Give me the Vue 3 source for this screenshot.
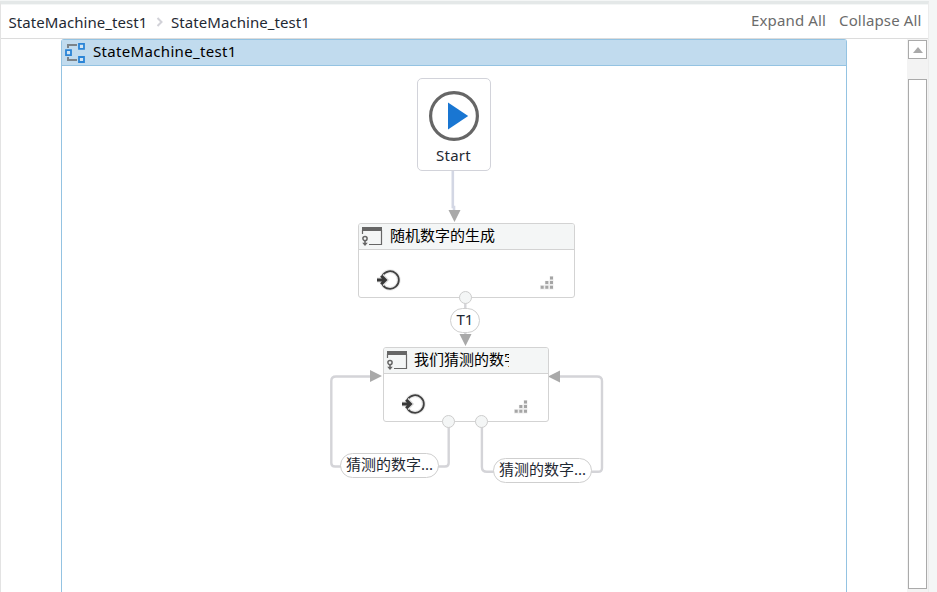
<script setup>
const crumbs = ['StateMachine_test1', 'StateMachine_test1']
const states = [
  { id: 'generate', title: '随机数字的生成' },
  { id: 'guess', title: '我们猜测的数字' },
]
const transitions = [
  { id: 't1', label: 'T1' },
  { id: 'left', label: '猜测的数字...' },
  { id: 'right', label: '猜测的数字...' },
]
</script>

<template>
  <div class="window">
    <div class="designer">
      <header class="toolbar">
        <nav class="crumbs">
          <span class="crumb">{{ crumbs[0] }}</span>
          <svg class="chevron" width="8" height="10" viewBox="0 0 8 10"><path d="M1.5 1 5.5 5 1.5 9" /></svg>
          <span class="crumb">{{ crumbs[1] }}</span>
        </nav>
        <div class="actions"><span class="expand">Expand All</span><span class="collapse">Collapse All</span></div>
      </header>
      <div class="body">
        <main class="machine">
          <div class="machine-head">
            <svg width="21" height="21" viewBox="0 0 21 21" fill="none">
              <path d="M3 6V3h9M3 15v3h9" stroke="#7b8389" stroke-width="2" />
              <path d="M14 1.8h5v5h-5zM14 15h5v5h-5zM1 8.2h5v5H1z" fill="#d3e5f3" stroke="#2a84d6" stroke-width="1.8" />
            </svg>
            <span class="machine-title">{{ crumbs[1] }}</span>
          </div>
          <div class="canvas">
            <svg class="links" width="784" height="526" viewBox="62 66 784 526" fill="none">
              <path d="M452.8 170V207H454V212" stroke="#d3d7e4" stroke-width="2.6" />
              <path d="M465.3 298V340M448.7 421V463Q448.7 466.5 445 466.5H335Q331.3 466.5 331.3 463V381Q331.3 376.5 336 376.5H371M481.9 421V467Q481.9 471.8 487 471.8H598Q602 471.8 602 468V381Q602 376.5 597 376.5H559" stroke="#d4d4d8" stroke-width="2.4" />
              <path d="M448.5 210h12l-6 12zM459.5 334h12l-6 12zM370 370v12l12-6zM560 370.5v12l-12-6z" fill="#a9a9a9" />
            </svg>

            <div class="start">
              <svg width="52" height="52" viewBox="0 0 52 52">
                <circle cx="26" cy="26" r="23.4" fill="#fff" stroke="#666" stroke-width="3.2" />
                <path d="M20 12.5 40.2 26 20 39.5z" fill="#1976d2" />
              </svg>
              <span class="start-label">Start</span>
            </div>

            <section v-for="s in states" :key="s.id" class="state" :class="s.id">
              <div class="state-head">
                <svg width="22" height="21" viewBox="0 0 22 21" fill="none">
                  <path d="M1 1h20v4H1z" fill="#666" />
                  <path d="M1.5 4v4M20.5 4v14.5H8" stroke="#666" stroke-width="1.2" />
                  <circle cx="4" cy="12.6" r="2.1" stroke="#666" stroke-width="1.5" />
                  <path d="M4 15v3" stroke="#666" stroke-width="1.5" />
                  <path d="M1.2 16.7h5.6L4 20z" fill="#666" />
                </svg>
                <span class="state-title">{{ s.title }}</span>
              </div>
              <div class="state-body">
                <svg width="26" height="24" viewBox="0 0 26 24" fill="none">
                  <circle cx="15" cy="12" r="8.7" stroke="#e8e8e8" stroke-width="4" />
                  <path d="M7.6 7.3A8.8 8.8 0 1 1 7.6 16.7" stroke="#414141" stroke-width="1.8" />
                  <path d="M2 12h8M6.8 7.8l4 4.2-4 4.2" stroke="#dedede" stroke-width="5" />
                  <path d="M2 12h8M6.2 7.8l4.2 4.2-4.2 4.2" stroke="#383838" stroke-width="3" />
                </svg>
                <svg class="steps" width="14" height="14" viewBox="0 0 14 14">
                  <path d="M9.5 0h4v13.5H0V9h4.8V4.7h4.7z" fill="#eee" />
                  <path d="M10 .5h3v3h-3zM10 5h3v3h-3zM10 9.7h3v3h-3zM5.3 5h3v3h-3zM5.3 9.7h3v3h-3zM.7 9.7h3v3h-3z" fill="#a5a5a5" />
                </svg>
              </div>
            </section>

            <i class="port port-a"></i>
            <i class="port port-b"></i>
            <i class="port port-c"></i>
            <div v-for="t in transitions" :key="t.id" class="pill" :class="t.id">
              <span>{{ t.label }}</span>
            </div>
          </div>
        </main>
        <aside class="scrollbar">
          <div class="up"><svg width="10" height="6" viewBox="0 0 10 6"><path d="M5 0 10 6H0z" fill="#a9a9a9" /></svg></div>
          <div class="thumb"></div>
        </aside>
      </div>
    </div>
  </div>
</template>

<style>
body { background: #f4f6f6; overflow: hidden; }
</style>

<style scoped>
* { box-sizing: border-box; }
.window {
  width: 937px;
  height: 592px;
  padding-top: 1px;
  font: 15px/20px "Noto Sans", "Noto Sans CJK SC", sans-serif;
  color: #1f2933;
  background: #f4f6f6;
}
.designer {
  display: flex;
  flex-direction: column;
  width: 929px;
  height: 591px;
  background: #fff;
  border-top: 3px solid #e4e8e8;
  border-left: 1px solid #e3e3e3;
  border-right: 1px solid #ececec;
}
.toolbar {
  display: flex;
  flex: none;
  justify-content: space-between;
  height: 35px;
  padding: 0 6px 0 7.5px;
  border-top: 1px solid #f4f6f6;
  border-bottom: 1px solid #dcdcdc;
}
.crumbs { display: flex; align-items: center; height: 33px; }
.crumb { width: 139px; white-space: nowrap; letter-spacing: 0.07px; }
.chevron { margin: 0 7.5px 0 8px; width: 8px; }
.chevron path { fill: none; stroke: #d2d2d8; stroke-width: 2; }
.actions { display: flex; gap: 12px; padding-top: 5px; color: #6b6b6b; white-space: nowrap; }
.expand { width: 76px; letter-spacing: 0.15px; }
.collapse { width: 83px; letter-spacing: 0.15px; }
.body { display: flex; flex: 1; min-height: 0; }
.machine {
  display: flex;
  flex-direction: column;
  width: 786px;
  height: 553px;
  margin-left: 60px;
  border: 1px solid #94c3e2;
  border-bottom: 0;
  border-radius: 3px 3px 0 0;
}
.machine-head {
  display: flex;
  flex: none;
  align-items: center;
  gap: 7px;
  height: 26px;
  padding-left: 3px;
  color: #000;
  background: #c1dbee;
  border-bottom: 1px solid #94c3e2;
}
.machine-title { margin-top: -4px; letter-spacing: 0.33px; }
.canvas { position: relative; flex: 1; min-height: 0; }
.links { display: block; }
.start {
  position: absolute;
  left: 355px;
  top: 12px;
  display: flex;
  flex-direction: column;
  align-items: center;
  width: 74px;
  height: 93px;
  padding-top: 11px;
  background: #fff;
  border: 1px solid #d2d3da;
  border-radius: 5px;
}
.start-label { margin: 3px 1px 0 0; letter-spacing: 0.3px; }
.state {
  position: absolute;
  height: 75px;
  overflow: hidden;
  background: #fff;
  border: 1px solid #d3d3d3;
  border-radius: 3px;
}
.generate { left: 296px; top: 157px; width: 217px; }
.guess { left: 321px; top: 281px; width: 166px; }
.state-head {
  display: flex;
  height: 26px;
  padding: 2px 0 0 2px;
  background: #f4f6f6;
  border-bottom: 1px solid #d3d3d3;
}
.state-head svg { flex: none; }
.state-title {
  flex: none;
  height: 20px;
  margin: -1px 0 0 7px;
  overflow: hidden;
  line-height: 20px;
  white-space: nowrap;
  color: #000;
}
.guess .state-title { width: 95px; margin-left: 6px; }
.state-body { display: flex; justify-content: space-between; padding: 18px 20px 0 16px; }
.steps { margin-top: 8px; }
.port {
  position: absolute;
  width: 13px;
  height: 13px;
  background: #f4f6f6;
  border: 1px solid #cdcdcd;
  border-radius: 50%;
}
.port-a { left: 397px; top: 225px; }
.port-b { left: 380px; top: 349px; }
.port-c { left: 413px; top: 349px; }
.pill {
  position: absolute;
  display: flex;
  align-items: center;
  justify-content: center;
  height: 25px;
  padding-bottom: 3px;
  background: #fff;
  border: 1px solid #cfcfcf;
  border-radius: 13px;
  white-space: nowrap;
}
.t1 { left: 388px; top: 242px; width: 30px; }
.left { left: 278px; top: 387px; width: 99px; }
.right { left: 431px; top: 392px; width: 99px; }
.scrollbar {
  display: flex;
  flex-direction: column;
  width: 21px;
  margin-left: auto;
  padding: 1px 1px 3px 1px;
  background: #f3f3f3;
}
.up {
  display: flex;
  align-items: center;
  justify-content: center;
  height: 19px;
  margin-bottom: 20px;
  background: #fff;
  border: 1px solid #aaa;
}
.thumb { flex: 1; background: #fff; border: 1px solid #aaa; }
</style>
